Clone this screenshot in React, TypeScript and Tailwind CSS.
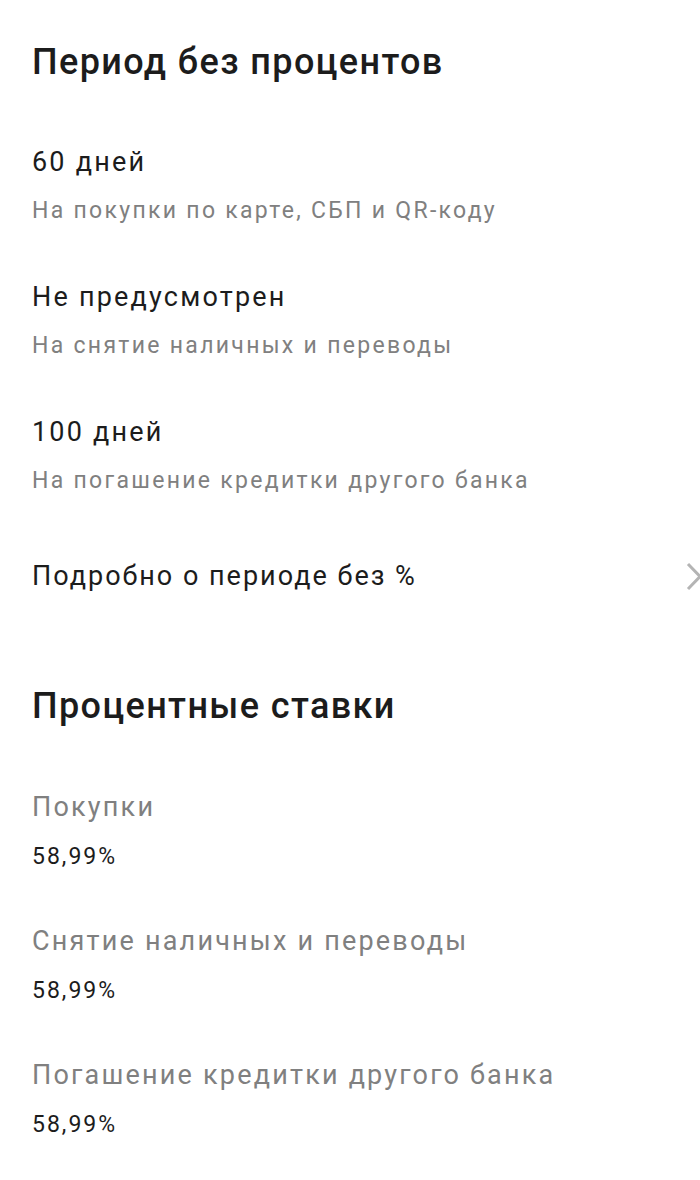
const periods = [
    { title: "60 дней", note: "На покупки по карте, СБП и QR-коду" },
    { title: "Не предусмотрен", note: "На снятие наличных и переводы" },
    { title: "100 дней", note: "На погашение кредитки другого банка" },
];

const rates = [
    { label: "Покупки", value: "58,99%" },
    { label: "Снятие наличных и переводы", value: "58,99%" },
    { label: "Погашение кредитки другого банка", value: "58,99%" },
];

export default function App() {
    return (
        <div className="w-[700px] h-[1180px] overflow-hidden bg-white pl-8 pt-10 font-['Roboto',sans-serif] text-[#1c1c1c]">
            {/* Period */}
            <h2 className="text-[36px] leading-[44px] font-medium tracking-[1.4px]">Период без процентов</h2>

            <div className="mt-[62px] flex flex-col gap-[56px]">
                {periods.map((p) => (
                    <div key={p.title}>
                        <div className="text-[27px] leading-[32px] tracking-[2.2px]">{p.title}</div>
                        <div className="mt-[19px] text-[23px] leading-[28px] text-[#808080] tracking-[2.3px]">{p.note}</div>
                    </div>
                ))}
            </div>

            <div className="mt-[65px] flex items-center justify-between">
                <span className="text-[27px] leading-[32px] tracking-[2px]">Подробно о периоде без %</span>
                <svg width="16" height="30" viewBox="0 0 16 30" fill="none" className="shrink-0">
                    <path d="M4 3 L16 15.5 L4 28" stroke="#b4b4b4" strokeWidth="3" />
                </svg>
            </div>

            {/* Rates */}
            <h2 className="mt-[92px] text-[36px] leading-[44px] font-medium tracking-[1.4px]">Процентные ставки</h2>

            <div className="mt-[63px] flex flex-col gap-[54px]">
                {rates.map((r) => (
                    <div key={r.label}>
                        <div className="text-[27px] leading-[32px] text-[#808080] tracking-[2.2px]">{r.label}</div>
                        <div className="mt-[20px] text-[23px] leading-[28px] tracking-[2px]">{r.value}</div>
                    </div>
                ))}
            </div>
        </div>
    );
}
